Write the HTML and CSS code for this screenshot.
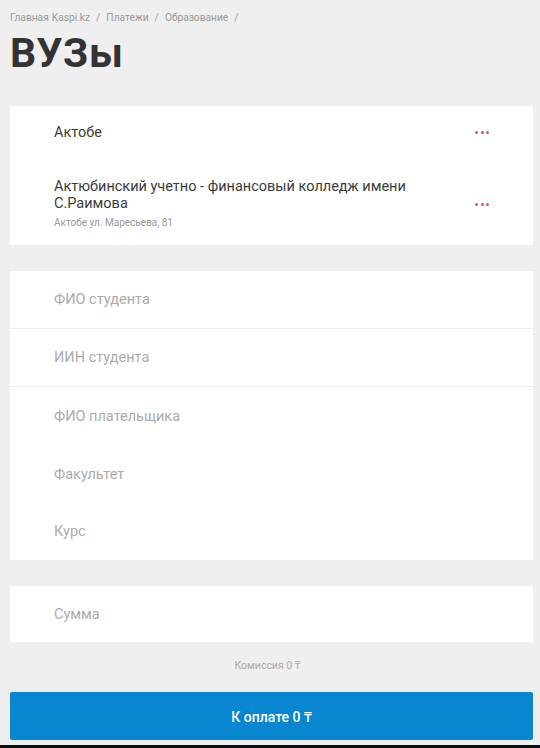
FILE: index.html
```html
<!DOCTYPE html>
<html lang="ru">
<head>
<meta charset="utf-8">
<title>ВУЗы</title>
<link rel="stylesheet" href="styles.css">
</head>
<body>
<div class="page">
  <nav class="crumbs">Главная Kaspi.kz &nbsp;/&nbsp; Платежи &nbsp;/&nbsp; Образование &nbsp;/</nav>
  <h1 class="title">ВУЗы</h1>

  <section class="card card-select">
    <div class="sel-row sel-city">
      <div class="sel-text"><div class="sel-name">Актобе</div></div>
      <span class="dots"><i></i><i></i><i></i></span>
    </div>
    <div class="sel-row sel-org">
      <div class="sel-text">
        <div class="sel-name">Актюбинский учетно - финансовый колледж имени С.Раимова</div>
        <div class="sel-sub">Актобе ул. Маресьева, 81</div>
      </div>
      <span class="dots"><i></i><i></i><i></i></span>
    </div>
  </section>

  <section class="card card-fields">
    <div class="field field-line">ФИО студента</div>
    <div class="field field-line">ИИН студента</div>
    <div class="field">ФИО плательщика</div>
    <div class="field">Факультет</div>
    <div class="field field-last">Курс</div>
  </section>

  <section class="card card-sum">
    <div class="field field-sum">Сумма</div>
  </section>

  <div class="fee">Комиссия 0 ₸</div>

  <button class="pay">К оплате 0 ₸</button>
</div>
<div class="bottom-bar"></div>
</body>
</html>
```

FILE: styles.css
```css
html, body {
  margin: 0;
  padding: 0;
}
body {
  background: #efefef;
  font-family: Roboto, "Noto Sans", "DejaVu Sans", sans-serif;
  color: #333;
  width: 540px;
  height: 748px;
  overflow: hidden;
  display: flex;
  flex-direction: column;
}
.page {
  padding: 12px 7px 0 10px;
  flex: 1;
}
.crumbs {
  font-size: 10.2px;
  line-height: 12px;
  color: #9a9a9a;
}
.crumbs {
  word-spacing: 0.5px;
}
.title {
  margin: 9px 0 0 0;
  font-size: 41px;
  line-height: 40px;
  font-weight: 700;
  color: #333;
  letter-spacing: 0.6px;
}
.card {
  background: #fff;
}
.card-select {
  margin-top: 33px;
}
.sel-row {
  display: flex;
  align-items: center;
  padding: 0 43px 0 44px;
}
.sel-city {
  height: 52px;
}
.sel-org {
  padding-top: 20px;
  padding-bottom: 15px;
}
.sel-text {
  flex: 1;
  min-width: 0;
}
.sel-name {
  font-size: 14.5px;
  line-height: 17px;
  color: #3c3c3c;
  padding-right: 40px;
}
.sel-sub {
  font-size: 10px;
  line-height: 14px;
  margin-top: 4px;
  color: #9a9a9a;
}
.dots {
  display: flex;
  gap: 2.5px;
  width: 15px;
}
.dots i {
  width: 3px;
  height: 3px;
  border-radius: 50%;
  background: #e4524f;
}
.card-fields {
  margin-top: 26px;
}
.field {
  height: 58px;
  box-sizing: border-box;
  display: flex;
  align-items: center;
  padding-left: 44px;
  font-size: 14.5px;
  color: #ababab;
}
.field-line {
  border-bottom: 1px solid #ececec;
}
.field-last {
  height: 57px;
}
.card-sum {
  margin-top: 26px;
}
.field-sum {
  height: 56px;
}
.fee {
  text-align: center;
  font-size: 10.5px;
  line-height: 14px;
  color: #a9a9a9;
  margin-top: 17px;
  padding-right: 8px;
}
.pay {
  display: block;
  width: 100%;
  height: 48px;
  margin-top: 19px;
  border: 0;
  border-radius: 2px;
  background: #0886cf;
  color: #fff;
  font-family: Roboto, "Noto Sans", "DejaVu Sans", sans-serif;
  font-size: 14px;
  font-weight: 500;
  cursor: pointer;
}
.bottom-bar {
  height: 3px;
  background: #111;
}
```
